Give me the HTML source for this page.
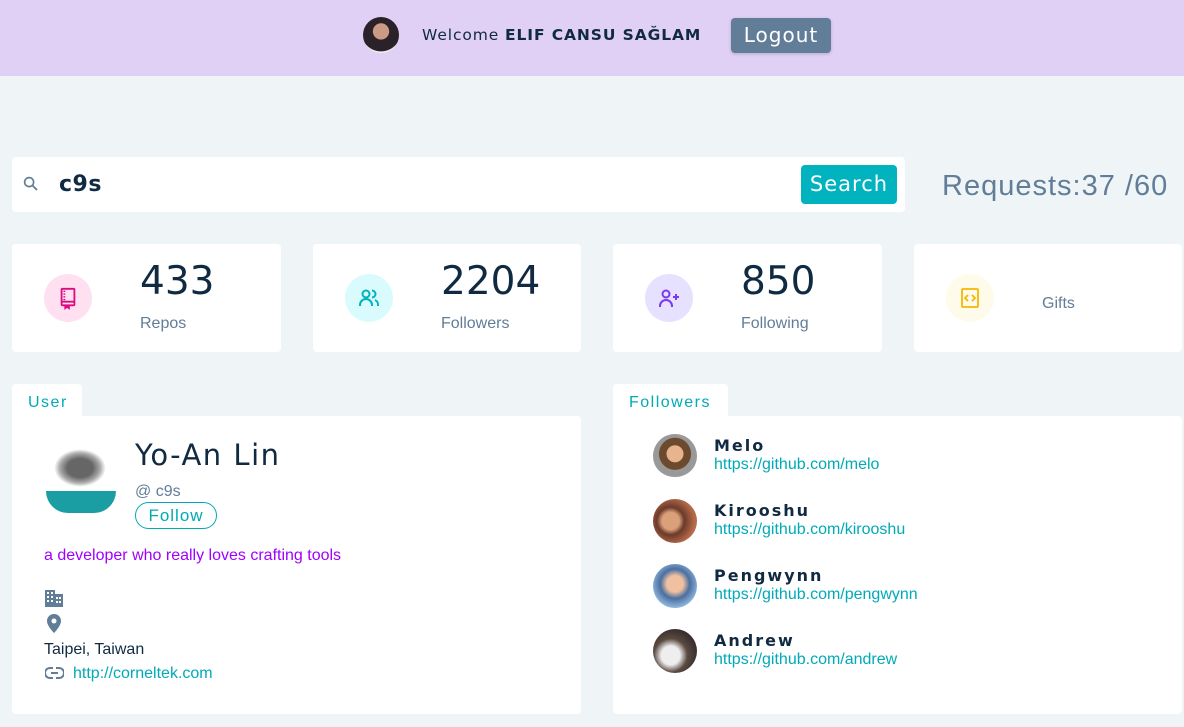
<!DOCTYPE html>
<html><head><meta charset="utf-8"><style>
*{box-sizing:border-box;margin:0;padding:0}
body{width:1184px;height:727px;background:#eff4f7;font-family:"Liberation Sans",sans-serif;position:relative;overflow:hidden}
.abs{position:absolute}
.hdr{left:0;top:0;width:1184px;height:76px;background:#e1d0f5}
.card{background:#fff;border-radius:4px}
.circ{position:absolute;left:32px;top:30px;width:48px;height:48px;border-radius:50%;display:flex;align-items:center;justify-content:center}
.num{position:absolute;left:128px;top:15px;font-size:39px;color:#102a42;font-family:"DejaVu Sans","Liberation Sans",sans-serif}
.lbl{position:absolute;left:128px;top:71px;font-size:16px;color:#617d98}
.tab{background:#fff;border-radius:4px 4px 0 0;color:#00aab7;font-size:16px;letter-spacing:1.5px;padding:10px 16px 0}
.fname{font-weight:bold;color:#102a42;font-size:16px;letter-spacing:2px;font-family:"DejaVu Sans",sans-serif}
.flink{color:#00aab7;font-size:16px;margin-top:1px}
.fav{position:absolute;width:44px;height:44px;border-radius:50%}
</style></head><body>
<div class="abs hdr"></div>
<div class="abs" style="left:363px;top:17px;width:36px;height:36px;border-radius:50%;background:radial-gradient(circle at 50% 40%,#c99a84 0 28%,#2a2228 30% 70%,#eee 72%)"></div>
<div class="abs" style="left:422px;top:26px;font-size:15.5px;color:#102a42;letter-spacing:0.9px;font-family:'DejaVu Sans',sans-serif;white-space:nowrap">Welcome <b>ELIF CANSU SAĞLAM</b></div>
<div class="abs" style="left:731px;top:18px;width:100px;height:35px;background:#617d98;border-radius:4px;color:#fff;font-size:20px;text-align:center;line-height:35px;letter-spacing:1px;box-shadow:0 1px 3px rgba(0,0,0,.2);font-family:'DejaVu Sans',sans-serif">Logout</div>

<div class="abs card" style="left:12px;top:157px;width:893px;height:55px"></div>
<svg class="abs" style="left:22px;top:175px" width="18" height="18" viewBox="0 0 24 24"><circle cx="9.5" cy="9.5" r="6" fill="none" stroke="#617d98" stroke-width="2.2"/><path d="M14 14l6 6" stroke="#617d98" stroke-width="2.5"/></svg>
<div class="abs" style="left:59px;top:172px;font-size:22px;color:#102a42;font-weight:bold;letter-spacing:0.5px;font-family:'DejaVu Sans',sans-serif">c9s</div>
<div class="abs" style="left:801px;top:165px;width:96px;height:39px;background:#00b3be;border-radius:4px;color:#fff;font-size:21px;text-align:center;line-height:39px;letter-spacing:1px;font-family:'DejaVu Sans',sans-serif">Search</div>
<div class="abs" style="left:942px;top:170px;font-size:29px;color:#617d98;letter-spacing:1px;white-space:nowrap">Requests:37 /60</div>

<div class="abs card" style="left:12px;top:244px;width:269px;height:108px">
<div class="circ" style="background:#ffe0f0"><svg width="22" height="24" viewBox="0 0 24 24" fill="none" stroke="#da0b83" stroke-width="2"><rect x="5" y="2" width="14" height="18" rx="1"/><path d="M8 4v12" stroke-dasharray="1.5 1.5"/><path d="M5 16h14M9 20v3l2-1.5 2 1.5v-3"/></svg></div>
<div class="num">433</div><div class="lbl">Repos</div></div>
<div class="abs card" style="left:313px;top:244px;width:268px;height:108px">
<div class="circ" style="background:#dafbfd"><svg width="24" height="24" viewBox="0 0 24 24" fill="none" stroke="#00b3be" stroke-width="2"><circle cx="9" cy="8" r="3.5"/><path d="M3 20v-1a6 6 0 0112 0v1M15 4.5a3.5 3.5 0 010 7M18 14a5 5 0 013 5v1"/></svg></div>
<div class="num">2204</div><div class="lbl">Followers</div></div>
<div class="abs card" style="left:613px;top:244px;width:269px;height:108px">
<div class="circ" style="background:#e6e1ff"><svg width="24" height="24" viewBox="0 0 24 24" fill="none" stroke="#7c3aed" stroke-width="2"><circle cx="9" cy="8" r="3.5"/><path d="M3 21v-1a6 6 0 0112 0v1M19 8v6M16 11h6"/></svg></div>
<div class="num">850</div><div class="lbl">Following</div></div>
<div class="abs card" style="left:914px;top:244px;width:268px;height:108px">
<div class="circ" style="background:#fffbea"><svg width="20" height="22" viewBox="0 0 20 22" fill="none" stroke="#f5b700" stroke-width="1.8"><rect x="2" y="2" width="16" height="18" rx="1"/><path d="M8 8l-3 3 3 3M12 8l3 3-3 3"/></svg></div>
<div class="lbl" style="top:51px">Gifts</div></div>

<div class="abs tab" style="left:12px;top:384px;width:70px;height:33px">User</div>
<div class="abs card" style="left:12px;top:416px;width:569px;height:298px;border-top-left-radius:0"></div>
<div class="abs" style="left:46px;top:445px;width:80px;height:75px">
<div style="position:absolute;left:8px;top:4px;width:52px;height:38px;background:radial-gradient(ellipse,#666 0 35%,#aaa 55%,transparent 70%)"></div>
<div style="position:absolute;left:0;top:46px;width:70px;height:22px;background:#1a9ea3;border-radius:0 0 30px 30px"></div>
</div>
<div class="abs" style="left:135px;top:438px;font-size:29px;color:#102a42;letter-spacing:1.5px;font-family:'DejaVu Sans',sans-serif">Yo-An Lin</div>
<div class="abs" style="left:135px;top:483px;font-size:16px;color:#617d98">@ c9s</div>
<div class="abs" style="left:135px;top:502px;width:82px;height:27px;border:1px solid #00aab7;border-radius:14px;color:#00aab7;font-size:17px;text-align:center;line-height:25px;letter-spacing:1px">Follow</div>
<div class="abs" style="left:44px;top:547px;font-size:16px;color:#a000ff">a developer who really loves crafting tools</div>
<svg class="abs" style="left:45px;top:590px" width="18" height="17" viewBox="0 0 18 17" fill="#617d98"><path d="M0 0h10v4h8v13H0z"/><g fill="#fff"><rect x="2" y="2" width="2" height="2"/><rect x="6" y="2" width="2" height="2"/><rect x="2" y="6" width="2" height="2"/><rect x="6" y="6" width="2" height="2"/><rect x="2" y="10" width="2" height="2"/><rect x="6" y="10" width="2" height="2"/><rect x="11" y="7" width="2" height="2"/><rect x="14" y="7" width="2" height="2"/><rect x="11" y="11" width="2" height="2"/><rect x="14" y="11" width="2" height="2"/></g></svg>
<svg class="abs" style="left:47px;top:614px" width="14" height="19" viewBox="0 0 14 19"><path d="M7 0a7 7 0 017 7c0 5-7 12-7 12S0 12 0 7a7 7 0 017-7z" fill="#617d98"/><circle cx="7" cy="7" r="2.5" fill="#fff"/></svg>
<div class="abs" style="left:44px;top:641px;font-size:16px;color:#102a42">Taipei, Taiwan</div>
<svg class="abs" style="left:45px;top:667px" width="19" height="12" viewBox="0 0 19 12" fill="none" stroke="#617d98" stroke-width="2"><path d="M8 1H5a5 5 0 000 10h3M11 1h3a5 5 0 010 10h-3M6 6h7"/></svg>
<div class="abs" style="left:73px;top:665px;font-size:16px;color:#00aab7">http://corneltek.com</div>

<div class="abs tab" style="left:613px;top:384px;width:115px;height:33px">Followers</div>
<div class="abs card" style="left:613px;top:416px;width:569px;height:298px;border-top-left-radius:0"></div>
<div class="fav" style="left:653px;top:434px;background:radial-gradient(circle at 50% 45%,#e8b48e 0 25%,#6b4a2e 27% 48%,#999 50% 70%,#fff 72%)"></div>
<div class="abs" style="left:714px;top:436px"><div class="fname">Melo</div><div class="flink">https://github.com/melo</div></div>
<div class="fav" style="left:653px;top:499px;background:radial-gradient(circle at 40% 50%,#d9a07a 0 25%,#6b3a2a 40%,#b56a4a 70%)"></div>
<div class="abs" style="left:714px;top:501px"><div class="fname">Kirooshu</div><div class="flink">https://github.com/kirooshu</div></div>
<div class="fav" style="left:653px;top:564px;background:radial-gradient(circle at 50% 45%,#f0c0a0 0 25%,#4a6fa0 45%,#8ab0d8 70%)"></div>
<div class="abs" style="left:714px;top:566px"><div class="fname">Pengwynn</div><div class="flink">https://github.com/pengwynn</div></div>
<div class="fav" style="left:653px;top:629px;background:radial-gradient(circle at 40% 60%,#eee 0 25%,#5a4a40 45%,#3a3030 70%)"></div>
<div class="abs" style="left:714px;top:631px"><div class="fname">Andrew</div><div class="flink">https://github.com/andrew</div></div>
</body></html>
